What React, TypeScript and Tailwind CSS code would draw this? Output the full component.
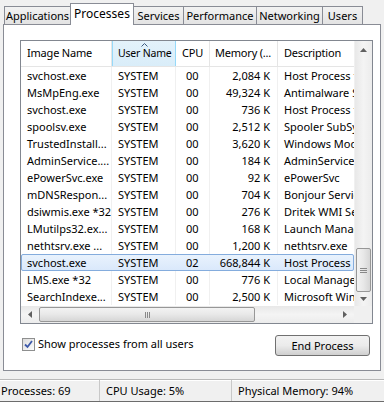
import React from 'react';

interface Proc {
  image: string;
  user: string;
  cpu: string;
  mem: string;
  desc: string;
}

const procs: Proc[] = [
  { image: 'svchost.exe', user: 'SYSTEM', cpu: '00', mem: '2,084 K', desc: 'Host Process for Windows Services' },
  { image: 'MsMpEng.exe', user: 'SYSTEM', cpu: '00', mem: '49,324 K', desc: 'Antimalware Service Executable' },
  { image: 'svchost.exe', user: 'SYSTEM', cpu: '00', mem: '736 K', desc: 'Host Process for Windows Services' },
  { image: 'spoolsv.exe', user: 'SYSTEM', cpu: '00', mem: '2,512 K', desc: 'Spooler SubSystem App' },
  { image: 'TrustedInstall...', user: 'SYSTEM', cpu: '00', mem: '3,620 K', desc: 'Windows Modules Installer' },
  { image: 'AdminService....', user: 'SYSTEM', cpu: '00', mem: '184 K', desc: 'AdminService Application' },
  { image: 'ePowerSvc.exe', user: 'SYSTEM', cpu: '00', mem: '92 K', desc: 'ePowerSvc' },
  { image: 'mDNSRespon...', user: 'SYSTEM', cpu: '00', mem: '704 K', desc: 'Bonjour Service' },
  { image: 'dsiwmis.exe *32', user: 'SYSTEM', cpu: '00', mem: '276 K', desc: 'Dritek WMI Service' },
  { image: 'LMutilps32.ex...', user: 'SYSTEM', cpu: '00', mem: '168 K', desc: 'Launch Manager' },
  { image: 'nethtsrv.exe ...', user: 'SYSTEM', cpu: '00', mem: '1,200 K', desc: 'nethtsrv.exe' },
  { image: 'svchost.exe', user: 'SYSTEM', cpu: '02', mem: '668,844 K', desc: 'Host Process for Windows Services' },
  { image: 'LMS.exe *32', user: 'SYSTEM', cpu: '00', mem: '776 K', desc: 'Local Manageability Service' },
  { image: 'SearchIndexe...', user: 'SYSTEM', cpu: '00', mem: '2,500 K', desc: 'Microsoft Windows Search Indexer' },
];

const tabs = ['Applications', 'Processes', 'Services', 'Performance', 'Networking', 'Users'];
const tabWidths: Record<string, string> = {
  Applications: 'w-[67px]',
  Processes: 'w-[64px]',
  Services: 'w-[51px]',
  Performance: 'w-[74px]',
  Networking: 'w-[67px]',
  Users: 'w-[41px]',
};

const cols = 'grid grid-cols-[91px_64px_34px_68px_76px]';

function Tri({ dir }: { dir: 'up' | 'down' | 'left' | 'right' }) {
  const pts = {
    up: '0,4 3.5,0 7,4',
    down: '0,0 3.5,4 7,0',
    left: '4,0 0,3.5 4,7',
    right: '0,0 4,3.5 0,7',
  }[dir];
  const vert = dir === 'up' || dir === 'down';
  return (
    <svg width={vert ? 7 : 4} height={vert ? 4 : 7} viewBox={vert ? '0 0 7 4' : '0 0 4 7'}>
      <polygon points={pts} fill="#606060" />
    </svg>
  );
}

export default function App() {
  return (
    <div
      className="w-[384px] h-[402px] bg-[#f0f0f0] flex flex-col text-[11px] text-black overflow-hidden"
      style={{ fontFamily: '"Noto Sans", "Open Sans", sans-serif' }}
    >
      {/* Tabs */}
      <div className="h-[24px] pl-[4px] flex items-end relative z-10">
        {tabs.map((t) =>
          t === 'Processes' ? (
            <div
              key={t}
              className={`${tabWidths[t]} h-[22px] -mb-px -ml-px bg-white border border-[#898c95] border-b-0 flex items-start justify-center pt-[1px] leading-[18px] text-[12px] whitespace-nowrap`}
            >
              {t}
            </div>
          ) : (
            <div
              key={t}
              className={`${tabWidths[t]} h-[18px] bg-gradient-to-b from-[#f2f2f2] to-[#e3e3e3] border border-[#898c95] border-b-0 -ml-px first:ml-0 flex items-center justify-center leading-[16px] whitespace-nowrap`}
            >
              {t}
            </div>
          )
        )}
      </div>

      {/* Panel */}
      <div className="ml-[3px] w-[378px] h-[347px] bg-white border border-[#898c95] pl-[16px] pt-[15px] flex flex-col">
        <div className="w-[353px] h-[284px] border border-[#828790] flex flex-col">
          <div className="flex h-[265px]">
            <div className="w-[333px] flex flex-col overflow-hidden">
              {/* Header */}
              <div className={`${cols} h-[26px] border-b border-[#e5e5e5] whitespace-nowrap tracking-[-0.2px]`}>
                <div className="flex items-center pl-[6px] border-r border-[#e5e5e5]">Image Name</div>
                <div className="relative flex items-center pl-[5px] text-[10.5px] bg-gradient-to-b from-[#e3f2fb] to-[#d9edf9] border-x border-[#96d9f9] overflow-hidden">
                  <svg className="absolute top-[2px] left-[28px]" width="7" height="4" viewBox="0 0 7 4">
                    <polyline points="0.5,3.5 3.5,0.5 6.5,3.5" fill="none" stroke="#3c5a7f" strokeWidth="1" />
                  </svg>
                  User Name
                </div>
                <div className="flex items-center pl-[6px] border-r border-[#e5e5e5]">CPU</div>
                <div className="flex items-center pl-[5px] border-r border-[#e5e5e5]">Memory (...</div>
                <div className="flex items-center pl-[6px] overflow-hidden">Description</div>
              </div>
              {/* Rows */}
              {procs.map((p, i) => {
                const sel = i === 11;
                return (
                  <div
                    key={i}
                    className={`${cols} h-[17px] leading-[17px] whitespace-nowrap ${
                      sel ? 'bg-gradient-to-b from-[#eaf3fd] to-[#d9e8fb] outline outline-1 -outline-offset-1 outline-[#84acdd] rounded-[2px]' : ''
                    }`}
                  >
                    <div className={`pl-[6px] overflow-hidden ${sel ? 'border-r border-transparent' : 'border-r border-[#f0f0f0]'}`}>{p.image}</div>
                    <div className={`pl-[6px] overflow-hidden ${sel ? 'border-r border-transparent' : 'border-r border-[#f0f0f0]'}`}>{p.user}</div>
                    <div className={`pl-[10px] overflow-hidden ${sel ? 'border-r border-transparent' : 'border-r border-[#f0f0f0]'}`}>{p.cpu}</div>
                    <div className={`pr-[7px] text-right overflow-hidden ${sel ? 'border-r border-transparent' : 'border-r border-[#f0f0f0]'}`}>{p.mem}</div>
                    <div className="pl-[6px] overflow-hidden">{p.desc}</div>
                  </div>
                );
              })}
            </div>
            {/* Vertical scrollbar */}
            <div className="w-[18px] bg-gradient-to-r from-[#e8e8e8] via-[#f4f4f4] to-[#ececec] flex flex-col border-l border-[#f0f0f0]">
              <div className="h-[17px] flex items-center justify-center"><Tri dir="up" /></div>
              <div className="flex-1 flex flex-col justify-end">
                <div className="mx-[1px] h-[44px] rounded-[2px] border border-[#979797] bg-gradient-to-r from-[#f3f3f3] via-[#e8e8e8] to-[#d6d6d6] flex flex-col items-center justify-center gap-[1px]">
                  <div className="w-[7px] h-px bg-[#888]" />
                  <div className="w-[7px] h-px bg-[#888]" />
                  <div className="w-[7px] h-px bg-[#888]" />
                </div>
              </div>
              <div className="h-[14px] flex items-center justify-center"><Tri dir="down" /></div>
            </div>
          </div>
          {/* Horizontal scrollbar */}
          <div className="flex h-[17px]">
            <div className="w-[333px] bg-gradient-to-b from-[#e8e8e8] via-[#f4f4f4] to-[#ececec] flex items-stretch">
              <div className="w-[18px] flex items-center justify-center"><Tri dir="left" /></div>
              <div className="w-[216px] my-[1px] rounded-[2px] border border-[#979797] bg-gradient-to-b from-[#f3f3f3] via-[#e8e8e8] to-[#d6d6d6] flex items-center justify-center gap-[1px]">
                <div className="h-[6px] w-px bg-[#888]" />
                <div className="h-[6px] w-px bg-[#888]" />
                <div className="h-[6px] w-px bg-[#888]" />
              </div>
              <div className="flex-1" />
              <div className="w-[18px] flex items-center justify-center"><Tri dir="right" /></div>
            </div>
            <div className="w-[18px] bg-[#f0f0f0]" />
          </div>
        </div>

        {/* Bottom controls */}
        <div className="w-[350px] mt-[11px] flex items-start justify-between">
          <label className="flex items-center gap-[3px] pl-[2px] pt-[1px]">
            <span className="w-[13px] h-[13px] border border-[#8e8f8f] bg-gradient-to-br from-[#dcdcdc] to-[#fdfdfd] flex items-center justify-center">
              <svg width="9" height="9" viewBox="0 0 9 9">
                <path d="M1 4.5 L3.5 7 L8 1" fill="none" stroke="#3d59a9" strokeWidth="1.8" />
              </svg>
            </span>
            <span>Show processes from all users</span>
          </label>
          <button className="w-[95px] h-[21px] rounded-[3px] border border-[#707070] bg-gradient-to-b from-[#f2f2f2] via-[#ebebeb] to-[#cfcfcf] leading-[19px]">
            End Process
          </button>
        </div>
      </div>

      {/* Status bar */}
      <div className="mt-[8px] h-[23px] border-t border-[#b8b8b8] flex items-center leading-[21px] shadow-[inset_0_1px_0_#fff] border-b border-b-[#6c6c6c]">
        <div className="w-[100px] pl-[1px] border-r border-[#c8c8c8]">Processes: 69</div>
        <div className="w-[132px] pl-[6px] border-r border-[#c8c8c8]">CPU Usage: 5%</div>
        <div className="flex-1 pl-[6px]">Physical Memory: 94%</div>
      </div>
    </div>
  );
}
